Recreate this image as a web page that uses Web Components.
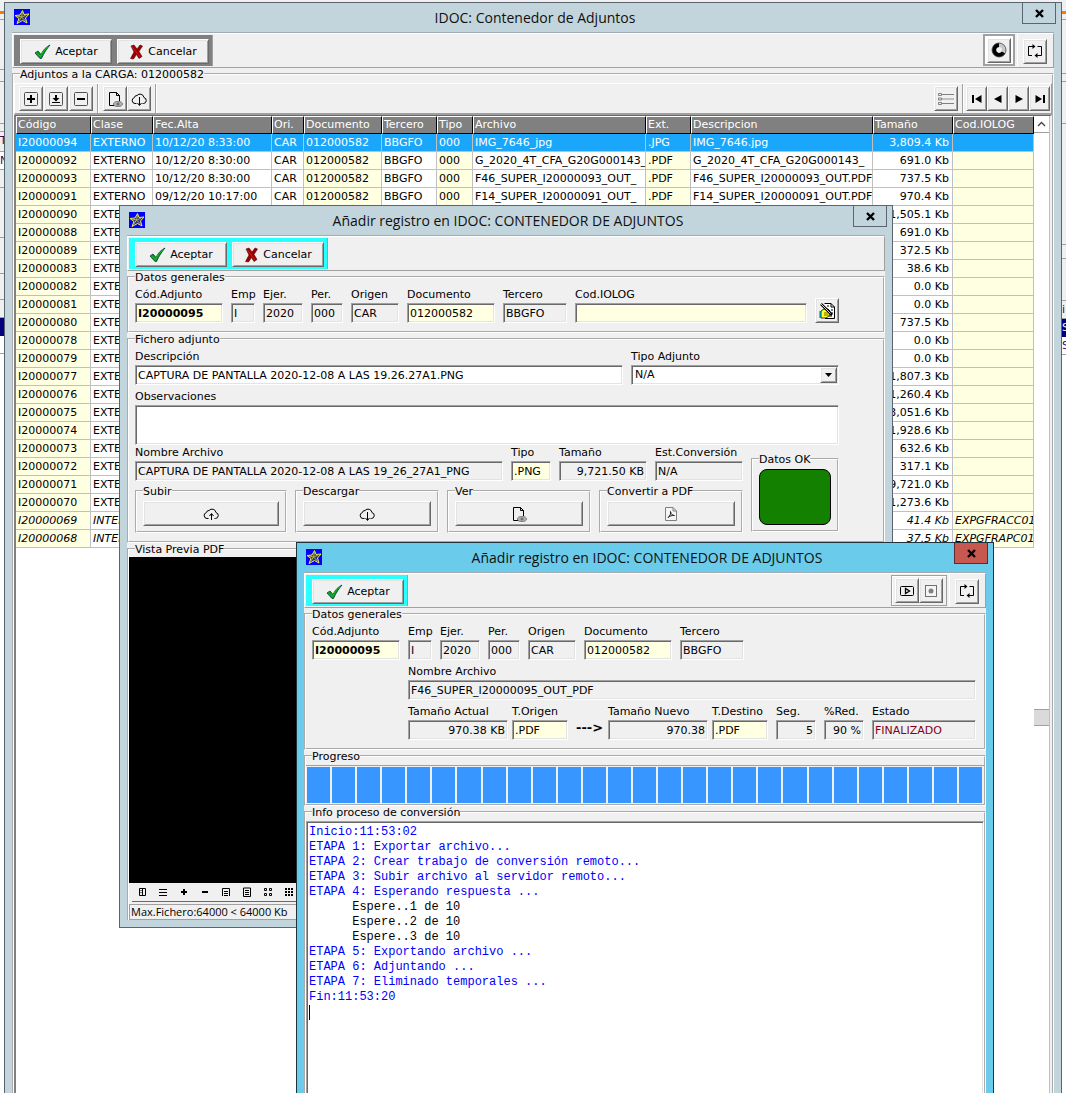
<!DOCTYPE html>
<html lang="es">
<head>
<meta charset="utf-8">
<title>IDOC: Contenedor de Adjuntos</title>
<style>
  html, body { height: 100%; }
  body {
    margin: 0; position: relative; overflow: hidden; background: #f0f0f0; color: #000;
    font: 11px/16px "DejaVu Sans", "Liberation Sans", sans-serif;
    --face: #f0f0f0; --cream: #ffffe1;
  }
  desk-edge { position: absolute; top: 0; bottom: 0; }
  desk-edge.l { left: 0; }
  desk-edge.r { right: 0; }
  app-window { position: absolute; }
  #main { left: 4px; right: 4px; top: 2px; bottom: -16px; }
  #add { left: 119px; top: 205px; width: 774px; }
  #conv { left: 296px; top: 542px; bottom: -16px; width: 698px; }
  .row { display: flex; gap: 8px; align-items: flex-start; }
  .pair { display: flex; gap: 4px; }
  .stack { display: flex; flex-direction: column; gap: 4px; }
  .indent { margin-left: 96px; }
  .grow { flex: 1; min-width: 0; }
  .act { width: 144px; }
  .end { align-self: flex-end; }
  .down { margin-top: 8px; width: 88px; }
  .arrow { width: 24px; padding-top: 16px; font: bold 13px/16px "DejaVu Sans", sans-serif; white-space: nowrap; }
</style>
</head>
<body>
<desk-edge class="l" side="l"></desk-edge>
<desk-edge class="r" side="r"></desk-edge>

<app-window id="main" heading="IDOC: Contenedor de Adjuntos">
  <tool-bar>
    <action-strip><tool-button icon="check" label="Aceptar" wide></tool-button><tool-button icon="cross" label="Cancelar" wide></tool-button></action-strip>
    <tool-cell slot="end" frame="thick"><tool-button icon="ring" hint="Estado"></tool-button></tool-cell>
    <tool-cell slot="end" frame="raised"><tool-button icon="loop" hint="Refrescar"></tool-button></tool-cell>
  </tool-bar>
  <group-box label="Adjuntos a la CARGA: 012000582" flush fill>
    <tool-bar slim>
      <tool-cell frame="right"><tool-button icon="plus" hint="Añadir"></tool-button><tool-button icon="import" hint="Importar"></tool-button><tool-button icon="minus" hint="Quitar"></tool-button></tool-cell>
      <tool-cell frame="right" tight><tool-button icon="docview" hint="Ver"></tool-button><tool-button icon="clouddown" hint="Descargar"></tool-button></tool-cell>
      <tool-cell slot="end" frame="right"><tool-button icon="list" hint="Lista"></tool-button></tool-cell>
      <tool-cell slot="end" frame="none" tight><tool-button icon="first" hint="Primero" narrow></tool-button><tool-button icon="prev" hint="Anterior" narrow></tool-button><tool-button icon="next" hint="Siguiente" narrow></tool-button><tool-button icon="last" hint="Último" narrow></tool-button></tool-cell>
    </tool-bar>
    <data-grid></data-grid>
  </group-box>
</app-window>

<app-window id="add" heading="Añadir registro en IDOC: CONTENEDOR DE ADJUNTOS">
  <tool-bar>
    <action-strip cyan><tool-button icon="check" label="Aceptar" wide></tool-button><tool-button icon="cross" label="Cancelar" wide></tool-button></action-strip>
  </tool-bar>
  <group-box label="Datos generales">
    <div class="row">
      <form-field label="Cód.Adjunto" value="I20000095" w="88" cream bold></form-field>
      <form-field label="Emp" value="I" w="24" locked></form-field>
      <form-field label="Ejer." value="2020" w="40" locked></form-field>
      <form-field label="Per." value="000" w="32" locked></form-field>
      <form-field label="Origen" value="CAR" w="48" locked></form-field>
      <form-field label="Documento" value="012000582" w="88" cream></form-field>
      <form-field label="Tercero" value="BBGFO" w="64" locked></form-field>
      <form-field label="Cod.IOLOG" value="" w="232" cream></form-field>
      <tool-button class="end" icon="hand" hint="Editar"></tool-button>
    </div>
  </group-box>
  <group-box label="Fichero adjunto">
    <div class="stack">
      <div class="row">
        <form-field label="Descripción" value="CAPTURA DE PANTALLA 2020-12-08 A LAS 19.26.27A1.PNG" w="488"></form-field>
        <form-field label="Tipo Adjunto" value="N/A" w="208" kind="select"></form-field>
      </div>
      <form-field label="Observaciones" value="" w="704" kind="area"></form-field>
    </div>
    <div class="row">
      <div class="stack">
        <div class="row">
          <form-field label="Nombre Archivo" value="CAPTURA DE PANTALLA 2020-12-08 A LAS 19_26_27A1_PNG" w="368" locked></form-field>
          <form-field label="Tipo" value=".PNG" w="40" cream></form-field>
          <form-field label="Tamaño" value="9,721.50 KB" w="88" locked right></form-field>
          <form-field label="Est.Conversión" value="N/A" w="88" locked></form-field>
        </div>
        <div class="row">
          <group-box label="Subir" class="grow" small><tool-button icon="cloudup" hint="Subir" block></tool-button></group-box>
          <group-box label="Descargar" class="act" small><tool-button icon="clouddown" hint="Descargar" block></tool-button></group-box>
          <group-box label="Ver" class="act" small><tool-button icon="docview" hint="Ver" block></tool-button></group-box>
          <group-box label="Convertir a PDF" class="act" small><tool-button icon="pdf" hint="Convertir a PDF" block></tool-button></group-box>
        </div>
      </div>
      <group-box label="Datos OK" class="down" small><status-light></status-light></group-box>
    </div>
  </group-box>
  <group-box label="Vista Previa PDF" flush open><pdf-preview note="Max.Fichero:64000 &lt; 64000 Kb"></pdf-preview></group-box>
</app-window>

<app-window id="conv" heading="Añadir registro en IDOC: CONTENEDOR DE ADJUNTOS" active>
  <tool-bar>
    <action-strip cyan><tool-button icon="check" label="Aceptar" wide></tool-button></action-strip>
    <tool-cell slot="end" frame="thin"><tool-button icon="play" hint="Iniciar"></tool-button><tool-button icon="stop" hint="Detener"></tool-button></tool-cell>
    <tool-cell slot="end" frame="raised"><tool-button icon="loop" hint="Refrescar"></tool-button></tool-cell>
  </tool-bar>
  <group-box label="Datos generales">
    <div class="stack">
      <div class="row">
        <form-field label="Cód.Adjunto" value="I20000095" w="88" cream bold></form-field>
        <form-field label="Emp" value="I" w="24" locked></form-field>
        <form-field label="Ejer." value="2020" w="40" locked></form-field>
        <form-field label="Per." value="000" w="32" locked></form-field>
        <form-field label="Origen" value="CAR" w="48" locked></form-field>
        <form-field label="Documento" value="012000582" w="88" cream></form-field>
        <form-field label="Tercero" value="BBGFO" w="64" locked></form-field>
      </div>
      <div class="row indent">
        <form-field class="grow" label="Nombre Archivo" value="F46_SUPER_I20000095_OUT_PDF" locked></form-field>
      </div>
      <div class="row indent">
        <div class="pair">
          <form-field label="Tamaño Actual" value="970.38 KB" w="100" locked right></form-field>
          <form-field label="T.Origen" value=".PDF" w="56" cream></form-field>
        </div>
        <div class="arrow">---&gt;</div>
        <div class="pair">
          <form-field label="Tamaño Nuevo" value="970.38" w="100" locked right></form-field>
          <form-field label="T.Destino" value=".PDF" w="56" cream></form-field>
        </div>
        <form-field label="Seg." value="5" w="40" locked right></form-field>
        <form-field label="%Red." value="90 %" w="40" locked right></form-field>
        <form-field class="grow" label="Estado" value="FINALIZADO" locked alert></form-field>
      </div>
    </div>
  </group-box>
  <group-box label="Progreso" flush><progress-blocks count="27"></progress-blocks></group-box>
  <group-box label="Info proceso de conversión" flush fill><process-log></process-log></group-box>
</app-window>

<script>
const FONT = '"DejaVu Sans", "Liberation Sans", sans-serif';
const UI = '"Open Sans", "Noto Sans", sans-serif';
const RAISED = 'border:1px solid;border-color:#fff #696969 #696969 #fff;box-shadow:inset 1px 1px #e3e3e3,inset -1px -1px #a0a0a0;';
const SUNKEN = 'border:1px solid;border-color:#a0a0a0 #fff #fff #a0a0a0;box-shadow:inset 1px 1px #696969,inset -1px -1px #e3e3e3;';

const cloud = '<path d="M5.500 12.500H4a3 3 0 0 1-.6-5.900A2.500 2.500 0 0 1 6 4.500 4 4 0 0 1 13 6.600a3 3 0 0 1-.5 5.900H11.500" fill="none" stroke="#000"/>';
const page = '<path d="M9.500 14.500H2.500V1.500H9.500L12.500 4.500V10M9.500 1.500V4.500H12.500" fill="none" stroke="#000"/>';
const box = (c) => `<rect x="1.500" y="1.500" width="13" height="13" rx="1" fill="none" stroke="${c}"/>`;
const ICONS = {
  check: [17, 16, '<path d="M1 9L4 7l3 3.500C9 6 12 3 16 1c-3 3.500-6 8-8.500 13.500H6Z" fill="#0a9a0a" stroke="#003c50" stroke-width=".8"/><path d="M2.500 9L6.500 12.500C8.500 8 11 5 14 2.500" fill="none" stroke="#20c020"/>'],
  cross: [15, 16, '<path d="M2 2l3-1 3 4 3-4 2.500 1-3.500 5.500 3 5-3 2-2.500-4-3 4.500-3-.5L5 8Z" fill="#9a0000" stroke="#5a0000" stroke-width=".6"/><path d="M3 2.500L11 13" stroke="#e01818"/>'],
  star: [16, 16, '<rect width="16" height="16" fill="#0000ff"/><path d="M8.500 1.500L10 5.500 15 5 11.500 9 13 14 8.500 11.500 3 14.500 5 9.500 1 6.500 6 6Z" fill="#303090" stroke="#f0f040"/><path d="M8.500 3L7.500 8 12 12.500M3 7l5 1 4-2M7.500 8L4.500 12.500" fill="none" stroke="#b0b040"/>'],
  plus: [16, 16, box('#505050') + '<path d="M8 4v8M4 8h8" stroke="#000" stroke-width="2"/>'],
  import: [16, 16, box('#505050') + '<path d="M8 4v5" stroke="#000" stroke-width="2"/><path d="M4.500 7h7L8 10.500ZM4 11h8v1H4Z"/>'],
  minus: [16, 16, box('#505050') + '<path d="M4 8h8" stroke="#000" stroke-width="2"/>'],
  docview: [16, 16, page + '<ellipse cx="11" cy="13" rx="4.500" ry="2.500" fill="#b0b0b0" stroke="#808080"/><circle cx="11" cy="13" r="1.500" fill="#707070"/>'],
  clouddown: [17, 16, cloud + '<path d="M8.500 6v8M6.500 12L8.500 14.500 10.500 12" fill="none" stroke="#000"/>'],
  cloudup: [17, 16, cloud + '<path d="M8.500 14V8M6.500 10L8.500 7.500 10.500 10" fill="none" stroke="#000"/>'],
  pdf: [16, 16, '<path d="M2.500 1.500H10L13.500 5V14.500H2.500ZM10 1.500V5H13.500" fill="#f4f4f4" stroke="#808080"/><path d="M5 11.500C7 10 8 7.500 7.500 5.500 8 8.500 9.500 9.500 11.500 9.500 9 9 7 10 5 11.500Z" fill="none" stroke="#202020"/>'],
  list: [18, 14, '<path d="M1.500 1.500h3v2h-3ZM1.500 6h3v2h-3ZM1.500 10.500h3v2h-3Z" fill="none" stroke="#808080"/><path d="M5 2.500h12M5 11.500h12" stroke="#808080"/><path d="M5 7h12" stroke="#c0c0c0" stroke-width="2"/>'],
  first: [12, 10, '<path d="M1 1h2v8H1ZM10.500 1v8L4 5Z"/>'],
  prev: [12, 10, '<path d="M9.500 1v8L2 5Z"/>'],
  next: [12, 10, '<path d="M2.500 1v8L10 5Z"/>'],
  last: [12, 10, '<path d="M9 1h2v8H9ZM1.500 1v8L8 5Z"/>'],
  ring: [18, 16, '<circle cx="9" cy="8" r="5" fill="none" stroke="#c8c8c8" stroke-width="4"/><path d="M9 3a5 5 0 1 0 4.500 7.500" fill="none" stroke="#000" stroke-width="4"/><circle cx="9" cy="8" r="7" fill="none" stroke="#404040" stroke-width=".8"/>'],
  loop: [16, 16, '<path d="M6 3.500H1.500V12.500H5M10.500 3.500H14.500V12.500H9.500" fill="none" stroke="#000"/><path d="M5.500 1L8.500 3.500 5.500 6ZM10.500 10L7.500 12.500 10.500 15Z"/>'],
  play: [16, 16, '<rect x="1.500" y="3.500" width="13" height="9" rx="1" fill="none" stroke="#000"/><path d="M6.500 5.500v5L10.500 8Z" fill="none" stroke="#000" stroke-width="1.300"/>'],
  stop: [16, 16, '<rect x="2.500" y="2.500" width="11" height="11" fill="#f4f4f4" stroke="#707070"/><circle cx="8" cy="8" r="2.500" fill="#808080"/>'],
  hand: [18, 18, '<path d="M6.500 1.500H13L16.500 5v11.500H7" fill="#fff" stroke="#000"/><path d="M13 1.500V5h3.500M9 4h2M13 8h2M13 11h2M11 14h3" fill="none" stroke="#000"/><path d="M1 9h2v7H1Z" fill="#00e0e0"/><path d="M3 9l3-2h4l2 2-1 5-3 2H3Z" fill="#ffff20" stroke="#000" stroke-width=".8"/><path d="M3 2l11 11" stroke="#000" stroke-width="2.500"/><path d="M3 2l9.500 9.500" stroke="#ffe020"/><path d="M6 11h4M6 13h4" stroke="#806000"/>'],
  up: [9, 6, '<path d="M1 5L4.500 1.500 8 5" fill="none" stroke="#404040" stroke-width="1.300"/>'],
  caret: [7, 4, '<path d="M0 0h7L3.500 4Z"/>'],
  p1: [10, 10, '<path d="M2.500 1.500h6v7h-6ZM5.500 1.500v7" fill="none" stroke="#000"/><path d="M3.500 3.500h1M3.500 5.500h1" stroke="#000"/>'],
  p2: [10, 10, '<path d="M1 2.500h8M1 5.500h8M1 8.500h8" stroke="#000"/>'],
  p3: [10, 10, '<path d="M5 2v6M2 5h6" stroke="#000" stroke-width="2"/>'],
  p4: [10, 10, '<path d="M2 5h6" stroke="#000" stroke-width="2"/>'],
  p5: [10, 10, '<path d="M1.500 9V1.500h7V9M3 4.500h4M3 6.500h4M3 8.500h4" fill="none" stroke="#000"/>'],
  p6: [10, 10, '<path d="M1.500 1h7v8.500h-7ZM3 3.500h4M3 5.500h4M3 7.500h4" fill="none" stroke="#000"/>'],
  p7: [10, 10, '<path d="M1.500 1.500h2v2h-2ZM6.500 1.500h2v2h-2ZM1.500 6.500h2v2h-2ZM6.500 6.500h2v2h-2Z" fill="none" stroke="#000"/>'],
  p8: [10, 10, '<path d="M1 2h8M1 5h8M1 8h8" stroke="#000" stroke-width="2" stroke-dasharray="2 1"/>']
};
const svg = (n) => { const [w, h, b] = ICONS[n]; return `<svg width="${w}" height="${h}" viewBox="0 0 ${w} ${h}" aria-hidden="true">${b}</svg>`; };

class Base extends HTMLElement {
  connectedCallback() {
    if (this.shadowRoot) return;
    this.attachShadow({ mode: 'open' }).innerHTML = `<style>*{box-sizing:border-box}svg{display:block;flex:none}${this.css()}</style>${this.html()}`;
  }
  a(n) { return this.getAttribute(n) || ''; }
  has(n) { return this.hasAttribute(n); }
}

customElements.define('desk-edge', class extends Base {
  css() { return `
    :host{display:flex;flex-direction:column;width:4px;overflow:hidden;background:#f0f0f0;color:#400060;line-height:18px}
    div{flex:none;border-bottom:1px solid #a0a0a0;overflow:hidden}
    .o{border-bottom:3px solid #f57c00}.sel{background:#000080;color:#fff;border:0}.w{background:#fff}.fill{flex:1;border:0;background:#fff}`; }
  html() { return this.a('side') === 'l'
    ? '<div class="o" style="height:14px"></div><div style="height:6px"></div><div style="height:50px"></div><div style="height:12px"></div><div style="height:42px"></div><div style="height:8px"></div><div style="height:20px">T</div><div style="height:18px" class="w">N</div><div style="height:18px"></div><div style="height:50px"></div><div style="height:36px"></div><div style="height:26px"></div><div style="height:18px"></div><div class="sel" style="height:18px"></div><div class="w" style="height:18px"></div><div class="fill"></div>'
    : '<div class="o" style="height:14px"></div><div style="height:6px"></div><div style="height:54px"></div><div style="height:8px"></div><div style="height:42px"></div><div style="height:121px"></div><div style="height:14px"></div><div style="height:42px"></div><div style="height:18px">i</div><div class="sel" style="height:18px">S</div><div class="w" style="height:18px">S</div><div class="fill"></div>'; }
});

customElements.define('app-window', class extends Base {
  css() { const on = this.has('active'); return `
    :host{display:flex;flex-direction:column;box-sizing:border-box;background:${on ? '#6acbeb' : '#c3d5dc'};border:1px solid ${on ? '#20333c' : '#5a6570'};padding-bottom:7px}
    header{display:grid;grid-template-columns:1fr auto 1fr;height:29px;padding:0 5px 0 9px}
    .i{margin-top:6px}
    h1{margin:0;font:14px/29px ${UI};white-space:nowrap;color:#101010}
    button{display:flex;align-items:center;justify-content:center;justify-self:end;width:34px;height:21px;padding:0;border:1px solid ${on ? '#5f2a2a' : '#5a6570'};border-top:0;background:${on ? '#c75850' : 'transparent'}}
    main{flex:1;min-height:0;display:flex;flex-direction:column;margin:0 7px;background:var(--face);border-top:1px solid #a0acb2}`; }
  html() { return `<header><span class="i">${svg('star')}</span><h1>${this.a('heading')}</h1><button aria-label="Cerrar"><svg width="11" height="9" viewBox="0 0 11 9"><path d="M2 1L9 8M9 1L2 8" stroke="#000" stroke-width="2.400"/></svg></button></header><main><slot></slot></main>`; }
});

customElements.define('tool-bar', class extends Base {
  css() { const s = this.has('slim'); return `
    :host{display:flex;box-sizing:border-box;height:${s ? 32 : 35}px;flex:none;justify-content:space-between;border:1px solid;border-color:#fff #a0a0a0 #a0a0a0 #fff;${s ? 'margin-top:2px;border-bottom:2px solid #a0a0a0;' : ''}}
    div{display:flex;gap:${s ? 1 : 2}px;padding:${s ? 0 : 1}px}
    .e{padding-right:0;padding-bottom:0;padding-top:0}`; }
  html() { return '<div><slot></slot></div><div class="e"><slot name="end"></slot></div>'; }
});

customElements.define('action-strip', class extends Base {
  css() { return `:host{display:flex;gap:5px;padding:4px 3px 2px 6px;background:${this.has('cyan') ? '#2affff' : '#808080'};border-right:1px solid #a0a0a0}`; }
  html() { return '<slot></slot>'; }
});

customElements.define('tool-cell', class extends Base {
  css() { const f = this.a('frame'); const t = this.has('tight'); return `
    :host{display:flex;box-sizing:border-box;align-items:center;padding:0 4px;
    ${t ? 'padding-left:3px;' : ''}
    ${f === 'none' ? 'padding-right:1px;padding-left:1px;' : ''}
    ${f === 'right' ? 'border-right:1px solid #a0a0a0;box-shadow:1px 0 #fff;margin-right:1px;gap:' + (t ? 0 : 1) + 'px;' : ''}
    ${f === 'thick' ? 'border:2px solid #a0a0a0;padding:0 2px;background:#fff;margin-bottom:1px;' : ''}
    ${f === 'thin' ? 'border:1px solid #a0a0a0;padding:0 3px;margin:1px 0;box-shadow:inset 1px 1px #fff;' : ''}
    ${f === 'raised' ? 'padding:1px 6px 0 5px;border-left:1px solid #fff;' : ''}}`; }
  html() { return '<slot></slot>'; }
});

customElements.define('tool-button', class extends Base {
  css() { const w = this.has('wide') ? '92px' : this.has('narrow') ? '21px' : this.has('block') ? '100%' : '25px'; return `
    :host{display:block;${this.has('block') ? '' : 'flex:none;'}}
    button{display:flex;align-items:center;justify-content:center;gap:4px;width:${w === '25px' ? '24px' : w};height:25px;padding:0;background:var(--face);${RAISED}font:11px/16px ${FONT};color:#000}`; }
  html() { return `<button ${this.has('label') ? '' : `aria-label="${this.a('hint')}"`}>${svg(this.a('icon'))}${this.has('label') ? `<span>${this.a('label')}</span>` : ''}</button>`; }
});

customElements.define('group-box', class extends Base {
  css() { const f = this.has('flush'), s = this.has('small'), g = this.has('fill'); return `
    :host{display:${g ? 'flex' : 'flow-root'};${g ? 'flex:1;min-height:0;flex-direction:column;' : ''}}
    fieldset{margin:-1px 0 0;min-width:0;border:2px groove #fff;padding:${f ? '0' : s ? '3px 6px 5px' : '3px 8px 8px 6px'};${g ? 'flex:1;min-height:0;display:flex;flex-direction:column;' : ''}${this.has('open') ? 'border-bottom:0;' : ''}}
    legend{margin-left:${f ? 6 : 0}px;padding:2px 0 0;line-height:12px;white-space:nowrap}`; }
  html() { return `<fieldset><legend>${this.a('label')}</legend><slot></slot></fieldset>`; }
});

customElements.define('form-field', class extends Base {
  css() { return `
    :host{display:block;${this.has('w') ? `width:${this.a('w')}px;flex:none;` : ''}}
    label{display:block;height:16px;line-height:16px;white-space:nowrap}
    .box,input,textarea{display:block;width:100%;height:20px;margin:0;padding:0 2px;border-radius:0;outline:0;resize:none;
      background:${this.has('cream') ? 'var(--cream)' : this.has('locked') ? 'var(--face)' : '#fff'};
      color:${this.has('alert') ? '#800020' : '#000'};text-align:${this.has('right') ? 'right' : 'left'};
      font:${this.has('bold') ? 'bold ' : ''}11px/16px ${FONT};${SUNKEN}}
    textarea{height:40px}
    .box{display:flex;padding:1px}
    select{flex:1;appearance:none;border:0;outline:0;padding:0 2px;background:none;font:inherit;color:inherit}
    i{display:flex;align-items:center;justify-content:center;width:17px;background:var(--face);${RAISED}}`; }
  html() {
    const v = this.a('value'), k = this.a('kind'), ro = this.has('locked') ? 'readonly' : '';
    const c = k === 'select' ? `<div class="box"><select id="f"><option>${v}</option></select><i>${svg('caret')}</i></div>`
      : k === 'area' ? `<textarea id="f">${v}</textarea>` : `<input id="f" value="${v}" ${ro}>`;
    return `<label for="f">${this.a('label')}</label>${c}`;
  }
});

customElements.define('status-light', class extends Base {
  css() { return ':host{display:block;box-sizing:border-box;height:56px;border:1px solid #000;border-radius:8px;background:#138000}'; }
  html() { return ''; }
});

customElements.define('pdf-preview', class extends Base {
  css() { return `
    :host{display:block;padding-top:1px}
    .v{height:326px;background:#000}
    nav{display:flex;height:19px;gap:1px;margin-left:3px;align-items:center;border-bottom:1px solid #696969}
    button{display:flex;align-items:center;justify-content:center;width:20px;height:16px;padding:0;border:0;background:none}
    p{margin:2px 0 0;height:16px;padding:0 1px;border:1px solid #a0a0a0;font:11px/13px ${UI};white-space:nowrap}`; }
  html() { const t = ['Panel', 'Menú', 'Acercar', 'Alejar', 'Ancho', 'Página', 'Cuatro', 'Nueve'];
    return `<div class="v"></div><nav>${t.map((n, i) => `<button aria-label="${n}">${svg('p' + (i + 1))}</button>`).join('')}</nav><p>${this.a('note')}</p>`; }
});

customElements.define('progress-blocks', class extends Base {
  css() { return `
    :host{display:flex;gap:2px;margin-top:2px;height:39px;box-sizing:border-box;border-top:1px solid #a0a0a0;padding:1px 2px 1px 1px}
    b{flex:1;background:#3796ff}`; }
  html() { return '<b></b>'.repeat(+this.a('count')); }
});

customElements.define('process-log', class extends Base {
  css() { return `
    :host{display:block;flex:1;margin-top:2px;background:#fff;${SUNKEN}padding:3px 2px;font:12px/15px "Liberation Mono",monospace;color:#0000ff}
    p{margin:0;white-space:pre}.k{color:#000}
    .c{width:1px;height:15px;background:#000}`; }
  html() { const L = ['Inicio:11:53:02', 'ETAPA 1: Exportar archivo...', 'ETAPA 2: Crear trabajo de conversión remoto...', 'ETAPA 3: Subir archivo al servidor remoto...', 'ETAPA 4: Esperando respuesta ...', '      Espere..1 de 10', '      Espere..2 de 10', '      Espere..3 de 10', 'ETAPA 5: Exportando archivo ...', 'ETAPA 6: Adjuntando ...', 'ETAPA 7: Eliminado temporales ...', 'Fin:11:53:20'];
    return L.map(t => `<p${t[0] === ' ' ? ' class="k"' : ''}>${t}</p>`).join('') + '<div class="c"></div>'; }
});

customElements.define('data-grid', class extends Base {
  css() { return `
    :host{display:flex;flex:1;min-height:0;box-sizing:border-box;background:#fff;border:2px solid;border-color:#696969 #f0f0f0 #f0f0f0 #808080;border-top-width:1px}
    .t{flex:1;min-width:0}
    table{width:100%;table-layout:fixed;border-collapse:separate;border-spacing:0}
    th,td{height:18px;padding:1px 2px 0;overflow:hidden;white-space:nowrap;text-align:left;font-weight:normal;line-height:16px}
    th{background:#808080;color:#fff;border:1px solid;border-color:#fff #000 #000 #fff;padding:0 1px}
    td{border:solid #c0c0c0;border-width:0 1px 1px 0}
    .y{background:#ffffe1}
    .n{text-align:right;padding-right:3px}
    tr.s td{background:#1aa7fb;color:#fff}
    tr.i{font-style:italic}
    .b{display:flex;flex-direction:column;width:16px;border-right:1px solid #c0c0c0}
    .b button{height:17px;padding:0;border:0;border-bottom:1px solid #a0a0a0;background:#fff;display:flex;align-items:center;justify-content:center}
    .u{flex:583}.h{height:17px;background:#dadada;border:1px solid #a0a0a0;border-left:0;border-right:0}.d{flex:376}`; }
  html() {
    const heads = [['Código', 75], ['Clase', 62], ['Fec.Alta', 119], ['Ori.', 32], ['Documento', 78], ['Tercero', 55], ['Tipo', 36], ['Archivo', 173], ['Ext.', 45], ['Descripcion', 0], ['Tamaño', 80], ['Cod.IOLOG', 81]];
    const full = [
      ['I20000094', 'EXTERNO', '10/12/20 8:33:00', 'CAR', '012000582', 'BBGFO', '000', 'IMG_7646_jpg', '.JPG', 'IMG_7646.jpg', '3,809.4 Kb', ''],
      ['I20000092', 'EXTERNO', '10/12/20 8:30:00', 'CAR', '012000582', 'BBGFO', '000', 'G_2020_4T_CFA_G20G000143_', '.PDF', 'G_2020_4T_CFA_G20G000143_', '691.0 Kb', ''],
      ['I20000093', 'EXTERNO', '10/12/20 8:30:00', 'CAR', '012000582', 'BBGFO', '000', 'F46_SUPER_I20000093_OUT_', '.PDF', 'F46_SUPER_I20000093_OUT.PDF', '737.5 Kb', ''],
      ['I20000091', 'EXTERNO', '09/12/20 10:17:00', 'CAR', '012000582', 'BBGFO', '000', 'F14_SUPER_I20000091_OUT_', '.PDF', 'F14_SUPER_I20000091_OUT.PDF', '970.4 Kb', '']];
    const rest = [['90', '1,505.1'], ['88', '691.0'], ['89', '372.5'], ['83', '38.6'], ['82', '0.0'], ['81', '0.0'], ['80', '737.5'], ['78', '0.0'], ['79', '0.0'], ['77', '1,807.3'], ['76', '1,260.4'], ['75', '3,051.6'], ['74', '1,928.6'], ['73', '632.6'], ['72', '317.1'], ['71', '9,721.0'], ['70', '1,273.6'], ['69', '41.4', 'EXPGFRACC01'], ['68', '37.5', 'EXPGFRAPC01']]
      .map(([c, t, x]) => ['I200000' + c, x ? 'INTERNO' : 'EXTERNO', '', '', '', '', '', '', '', '', t + ' Kb', x || '']);
    const cream = [0, 4, 6, 8, 11];
    const cls = (i) => cream.includes(i) ? ' class="y"' : i === 10 ? ' class="n"' : '';
    return `<div class="t"><table><colgroup>${heads.map(h => `<col${h[1] ? ` style="width:${h[1]}px"` : ''}>`).join('')}</colgroup><thead><tr>${heads.map(h => `<th>${h[0]}</th>`).join('')}</tr></thead><tbody>${[...full, ...rest].map((r, k) => `<tr class="${k === 0 ? 's' : r[1] === 'INTERNO' ? 'i' : ''}">${r.map((c, i) => `<td${cls(i)}>${c}</td>`).join('')}</tr>`).join('')}</tbody></table></div><div class="b"><button aria-label="Subir">${svg('up')}</button><div class="u"></div><div class="h"></div><div class="d"></div></div>`;
  }
});
</script>
</body>
</html>
